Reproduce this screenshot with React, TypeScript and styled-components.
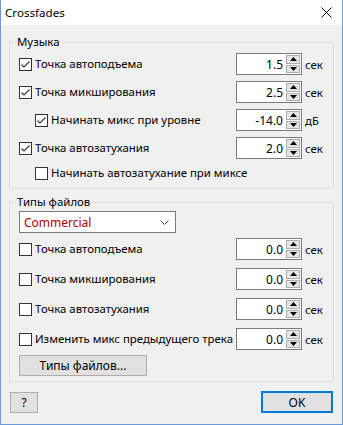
import React from 'react'
import styled, { createGlobalStyle } from 'styled-components'

const GlobalStyle = createGlobalStyle`
  html, body {
    margin: 0;
    padding: 0;
    background: #ffffff;
  }
  body {
    font-family: 'Noto Sans', 'Liberation Sans', sans-serif;
    font-size: 11.4px;
    color: #000;
  }
  * {
    box-sizing: border-box;
  }
`

const Window = styled.div`
  width: 343px;
  height: 425px;
  display: flex;
  flex-direction: column;
  background: #f0f0f0;
  border: 1px solid #6b9bd8;
  border-top: none;
`

const TitleBar = styled.div`
  height: 25px;
  flex: none;
  display: flex;
  align-items: center;
  justify-content: space-between;
  padding: 0 10px 0 4px;
  background: #ffffff;
  font-size: 11.6px;
`

const Body = styled.div`
  flex: 1;
  display: flex;
  flex-direction: column;
  padding: 10px 8px 0 8px;
`

const Group = styled.fieldset<{ $gap?: number }>`
  margin: ${p => p.$gap ?? 0}px 0 0 0;
  padding: 0;
  border: 1px solid #dcdcdc;
  min-width: 0;
`

const Legend = styled.legend`
  margin-left: 6px;
  padding: 0 1px;
  line-height: 14px;
`

const GroupBody = styled.div<{ $top: number, $bottom: number, $gap: number }>`
  display: flex;
  flex-direction: column;
  gap: ${p => p.$gap}px;
  padding: ${p => p.$top}px 0 ${p => p.$bottom}px 9px;
`

const Row = styled.div<{ $indent?: boolean, $short?: boolean }>`
  display: flex;
  align-items: center;
  height: ${p => (p.$short ? 16 : 22)}px;
  padding-left: ${p => (p.$indent ? 16 : 0)}px;
`

const CheckLabel = styled.label`
  flex: 1;
  min-width: 0;
  display: flex;
  align-items: center;
  gap: 3px;
  white-space: nowrap;
  line-height: 14px;
`

const Box = styled.span`
  width: 13px;
  height: 13px;
  flex: none;
  display: inline-flex;
  align-items: center;
  justify-content: center;
  background: #ffffff;
  border: 1px solid #333333;
`

const SpinBox = styled.div`
  width: 66px;
  height: 22px;
  flex: none;
  display: flex;
  align-items: stretch;
  background: #ffffff;
  border: 1px solid #7a7a7a;
`

const SpinValue = styled.div`
  flex: 1;
  display: flex;
  align-items: center;
  justify-content: flex-end;
  padding-right: 3px;
  font-size: 12px;
`

const SpinButtons = styled.div`
  width: 15px;
  display: flex;
  flex-direction: column;
  gap: 1px;
  padding: 1px 1px 1px 0;
`

const SpinButton = styled.div`
  flex: 1;
  display: flex;
  align-items: center;
  justify-content: center;
  background: #e5e5e5;
  border: 1px solid #adadad;
`

const Unit = styled.span`
  width: 31px;
  flex: none;
  padding-left: 3px;
`

const Select = styled.div`
  width: 157px;
  height: 22px;
  display: flex;
  align-items: center;
  justify-content: space-between;
  padding: 0 6px 0 4px;
  margin-bottom: -3px;
  background: #ffffff;
  border: 1px solid #7a7a7a;
  color: #b00000;
  font-size: 12px;
`

const Button = styled.button<{ $w: number, $h: number, $default?: boolean }>`
  width: ${p => p.$w}px;
  height: ${p => p.$h}px;
  padding: 0;
  font-family: inherit;
  font-size: 12px;
  color: #000;
  background: #e1e1e1;
  border: ${p => (p.$default ? '2px solid #0078d7' : '1px solid #adadad')};
`

const FilesButton = styled(Button)`
  margin-top: -3px;
`

const Footer = styled.div`
  display: flex;
  justify-content: space-between;
  align-items: center;
  padding: 9px 1px 0 1px;
`

function Check({ checked }: { checked?: boolean }) {
  return (
    <Box>
      {checked && (
        <svg width="11" height="11" viewBox="0 0 11 11">
          <polyline points="1.5,5.5 4,8 9.5,2.5" fill="none" stroke="#333" strokeWidth="1.1" />
        </svg>
      )}
    </Box>
  )
}

function Spinner({ value }: { value: string }) {
  return (
    <SpinBox>
      <SpinValue>{value}</SpinValue>
      <SpinButtons>
        <SpinButton>
          <svg width="7" height="4" viewBox="0 0 7 4"><polygon points="0,4 3.5,0 7,4" fill="#000" /></svg>
        </SpinButton>
        <SpinButton>
          <svg width="7" height="4" viewBox="0 0 7 4"><polygon points="0,0 3.5,4 7,0" fill="#000" /></svg>
        </SpinButton>
      </SpinButtons>
    </SpinBox>
  )
}

interface Field {
  label: string
  checked?: boolean
  indent?: boolean
  value?: string
  unit?: string
}

const music: Field[] = [
  { label: 'Точка автоподъема', checked: true, value: '1.5', unit: 'сек' },
  { label: 'Точка микширования', checked: true, value: '2.5', unit: 'сек' },
  { label: 'Начинать микс при уровне', checked: true, indent: true, value: '-14.0', unit: 'дБ' },
  { label: 'Точка автозатухания', checked: true, value: '2.0', unit: 'сек' },
  { label: 'Начинать автозатухание при миксе', indent: true },
]

const fileTypes: Field[] = [
  { label: 'Точка автоподъема', value: '0.0', unit: 'сек' },
  { label: 'Точка микширования', value: '0.0', unit: 'сек' },
  { label: 'Точка автозатухания', value: '0.0', unit: 'сек' },
  { label: 'Изменить микс предыдущего трека', value: '0.0', unit: 'сек' },
]

function FieldRow({ field }: { field: Field }) {
  return (
    <Row $indent={field.indent} $short={!field.value}>
      <CheckLabel>
        <Check checked={field.checked} />
        {field.label}
      </CheckLabel>
      {field.value && (
        <>
          <Spinner value={field.value} />
          <Unit>{field.unit}</Unit>
        </>
      )}
    </Row>
  )
}

export default function App() {
  return (
    <>
      <GlobalStyle />
      <Window>
        <TitleBar>
          <span>Crossfades</span>
          <svg width="11" height="11" viewBox="0 0 11 11">
            <path d="M0.5 0.5 L10.5 10.5 M10.5 0.5 L0.5 10.5" stroke="#000" strokeWidth="1" />
          </svg>
        </TitleBar>
        <Body>
          <Group>
            <Legend>Музыка</Legend>
            <GroupBody $top={4} $bottom={7} $gap={6}>
              {music.map(f => <FieldRow key={f.label} field={f} />)}
            </GroupBody>
          </Group>
          <Group $gap={6}>
            <Legend>Типы файлов</Legend>
            <GroupBody $top={2} $bottom={5} $gap={8}>
              <Select>
                <span>Commercial</span>
                <svg width="9" height="5" viewBox="0 0 9 5">
                  <polyline points="0.5,0.5 4.5,4.5 8.5,0.5" fill="none" stroke="#444" strokeWidth="1" />
                </svg>
              </Select>
              {fileTypes.map(f => <FieldRow key={f.label} field={f} />)}
              <FilesButton $w={128} $h={21}>Типы файлов...</FilesButton>
            </GroupBody>
          </Group>
          <Footer>
            <Button $w={28} $h={21}>?</Button>
            <Button $w={72} $h={22} $default>OK</Button>
          </Footer>
        </Body>
      </Window>
    </>
  )
}
